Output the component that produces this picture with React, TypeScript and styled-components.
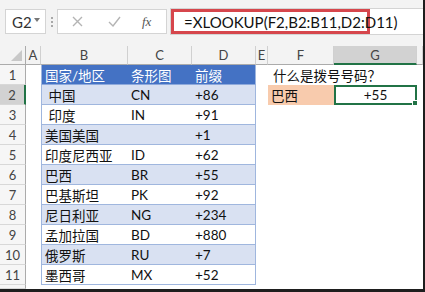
import React from 'react'
import styled, { createGlobalStyle, css } from 'styled-components'

const GlobalStyle = createGlobalStyle`
    html, body {
        margin: 0;
        padding: 0;
        background: #ffffff;
    }
    body {
        font-family: Lato, "Noto Sans CJK SC", sans-serif;
    }
`

const CJK = `Lato, "Noto Sans CJK SC", sans-serif`

const Frame = styled.div`
    width: 425px;
    height: 292px;
    box-sizing: border-box;
    border-right: 2px solid #1e1e1e;
    border-bottom: 3px solid #1e1e1e;
    display: flex;
    flex-direction: column;
    overflow: hidden;
    background: #ffffff;
`

const FormulaBar = styled.div`
    height: 46px;
    flex-shrink: 0;
    box-sizing: border-box;
    background: #f3f3f3;
    display: flex;
    align-items: flex-start;
    padding: 9px 0 0 5px;
`

const NameBox = styled.div`
    width: 41px;
    height: 25px;
    box-sizing: border-box;
    background: #ffffff;
    border: 1px solid #d4d4d4;
    display: flex;
    align-items: center;
    justify-content: space-between;
    padding: 0 5px 0 6px;
    font-family: ${CJK};
    font-size: 15px;
    color: #333;
`

const Caret = styled.span`
    width: 0;
    height: 0;
    border-left: 3px solid transparent;
    border-right: 3px solid transparent;
    border-top: 4px solid #777;
    margin-bottom: 4px;
`

const Grip = styled.div`
    width: 11px;
    height: 25px;
    display: flex;
    flex-direction: column;
    align-items: center;
    justify-content: center;
    gap: 2px;
    span {
        width: 2px;
        height: 2px;
        background: #a8a8a8;
    }
`

const ButtonBox = styled.div`
    width: 110px;
    height: 25px;
    box-sizing: border-box;
    background: #ffffff;
    border: 1px solid #d4d4d4;
    display: flex;
    align-items: center;
    padding-left: 14px;
    svg {
        display: block;
    }
`

const IconSlot = styled.span<{ $gap: number }>`
    display: flex;
    margin-right: ${(p) => p.$gap}px;
`

const Fx = styled.span`
    font-family: "Liberation Serif", serif;
    font-style: italic;
    font-size: 13px;
    color: #555;
`

const FormulaField = styled.div`
    flex: 1;
    height: 27px;
    margin-left: 3px;
    margin-top: -1px;
    box-sizing: border-box;
    background: #ffffff;
    border: 1px solid #d4d4d4;
    border-right: none;
    display: flex;
    align-items: stretch;
`

const Highlight = styled.div`
    width: 199px;
    box-sizing: border-box;
    border: 3px solid #d6464c;
    display: flex;
    align-items: center;
    padding-left: 10px;
    font-family: ${CJK};
    font-size: 15px;
    color: #111;
    white-space: nowrap;
`

const Sheet = styled.div`
    display: grid;
    grid-template-columns: 26px 15px 87px 64px 64px 12px 66px 83px 1fr;
    grid-template-rows: 19px repeat(11, 20px) 1fr;
    flex: 1;
    font-family: ${CJK};
`

const ColHead = styled.div<{ $active?: boolean }>`
    box-sizing: border-box;
    background: ${(p) => (p.$active ? '#d2d2d2' : '#f3f3f3')};
    border-right: 1px solid #d0d0d0;
    border-bottom: ${(p) => (p.$active ? '2px solid #217346' : '1px solid #ababab')};
    display: flex;
    align-items: center;
    justify-content: center;
    font-size: 13px;
    color: #444;
    padding-top: ${(p) => (p.$active ? '1px' : '0')};
`

const Corner = styled.div`
    box-sizing: border-box;
    background: #f3f3f3;
    border-right: 1px solid #ababab;
    border-bottom: 1px solid #ababab;
    position: relative;
    &::after {
        content: '';
        position: absolute;
        right: 3px;
        bottom: 3px;
        width: 0;
        height: 0;
        border-left: 11px solid transparent;
        border-bottom: 11px solid #c8c8c8;
    }
`

const RowHead = styled.div<{ $active?: boolean }>`
    box-sizing: border-box;
    background: ${(p) => (p.$active ? '#d2d2d2' : '#f6f6f6')};
    border-right: ${(p) => (p.$active ? '2px solid #217346' : '1px solid #ababab')};
    border-bottom: 1px solid #d8d8d8;
    display: flex;
    align-items: center;
    justify-content: center;
    font-size: 13px;
    color: #444;
`

type Tone = 'plain' | 'head' | 'band' | 'light' | 'peach' | 'active'

const toneStyles: Record<Tone, ReturnType<typeof css>> = {
    plain: css`
        background: #ffffff;
    `,
    head: css`
        background: #4472c4;
        color: #ffffff;
        border-bottom: 1px solid #8ea9db;
    `,
    band: css`
        background: #d9e1f2;
        border-bottom: 1px solid #9fb6de;
    `,
    light: css`
        background: #ffffff;
        border-bottom: 1px solid #9fb6de;
    `,
    peach: css`
        background: #f8cbad;
    `,
    active: css`
        background: #ffffff;
        border: 2px solid #217346;
        justify-content: center;
        padding-left: 0;
    `,
}

const Cell = styled.div<{ $tone?: Tone; $edge?: 'left' | 'right' }>`
    box-sizing: border-box;
    display: flex;
    align-items: center;
    padding-left: 3px;
    font-size: 13.5px;
    color: #111;
    white-space: pre;
    position: relative;
    ${(p) => toneStyles[p.$tone || 'plain']}
    ${(p) => p.$edge === 'left' && 'border-left: 1px solid #9fb6de;'}
    ${(p) => p.$edge === 'right' && 'border-right: 1px solid #9fb6de;'}
`

const Question = styled(Cell)`
    grid-column: span 3;
    padding-left: 5px;
`

const FillHandle = styled.span`
    position: absolute;
    right: -4px;
    bottom: -4px;
    width: 5px;
    height: 5px;
    background: #217346;
    border: 1px solid #ffffff;
`

const countries: [string, string, string][] = [
    [' 中国', 'CN', '+86'],
    [' 印度', 'IN', '+91'],
    ['美国美国', '', '+1'],
    ['印度尼西亚', 'ID', '+62'],
    ['巴西', 'BR', '+55'],
    ['巴基斯坦', 'PK', '+92'],
    ['尼日利亚', 'NG', '+234'],
    ['孟加拉国', 'BD', '+880'],
    ['俄罗斯', 'RU', '+7'],
    ['墨西哥', 'MX', '+52'],
]

const columns = ['A', 'B', 'C', 'D', 'E', 'F', 'G']

export default function App() {
    return (
        <>
            <GlobalStyle />
            <Frame>
                <FormulaBar>
                    <NameBox>
                        G2
                        <Caret />
                    </NameBox>
                    <Grip>
                        <span />
                        <span />
                        <span />
                    </Grip>
                    <ButtonBox>
                        <IconSlot $gap={25}>
                            <svg width="11" height="11" viewBox="0 0 11 11">
                                <path d="M1 1L10 10M10 1L1 10" stroke="#b4b4b4" strokeWidth="1.4" />
                            </svg>
                        </IconSlot>
                        <IconSlot $gap={21}>
                            <svg width="13" height="11" viewBox="0 0 13 11">
                                <path d="M1 6L5 10L12 1" stroke="#b4b4b4" strokeWidth="1.4" fill="none" />
                            </svg>
                        </IconSlot>
                        <Fx>fx</Fx>
                    </ButtonBox>
                    <FormulaField>
                        <Highlight>=XLOOKUP(F2,B2:B11,D2:D11)</Highlight>
                    </FormulaField>
                </FormulaBar>
                <Sheet>
                    <Corner />
                    {columns.map((c) => (
                        <ColHead key={c} $active={c === 'G'}>
                            {c}
                        </ColHead>
                    ))}
                    <ColHead />

                    <RowHead>1</RowHead>
                    <Cell />
                    <Cell $tone="head" $edge="left">国家/地区</Cell>
                    <Cell $tone="head">条形图</Cell>
                    <Cell $tone="head" $edge="right">前缀</Cell>
                    <Cell />
                    <Question>什么是拨号号码？</Question>

                    {countries.map(([name, code, prefix], i) => {
                        const row = i + 2
                        const tone: Tone = row % 2 === 0 ? 'band' : 'light'
                        return (
                            <React.Fragment key={row}>
                                <RowHead $active={row === 2}>{row}</RowHead>
                                <Cell />
                                <Cell $tone={tone} $edge="left">
                                    {name}
                                </Cell>
                                <Cell $tone={tone}>{code}</Cell>
                                <Cell $tone={tone} $edge="right">
                                    {prefix}
                                </Cell>
                                <Cell />
                                {row === 2 ? (
                                    <>
                                        <Cell $tone="peach">巴西</Cell>
                                        <Cell $tone="active">
                                            +55
                                            <FillHandle />
                                        </Cell>
                                    </>
                                ) : (
                                    <>
                                        <Cell />
                                        <Cell />
                                    </>
                                )}
                                <Cell />
                            </React.Fragment>
                        )
                    })}
                    <RowHead />
                </Sheet>
            </Frame>
        </>
    )
}
